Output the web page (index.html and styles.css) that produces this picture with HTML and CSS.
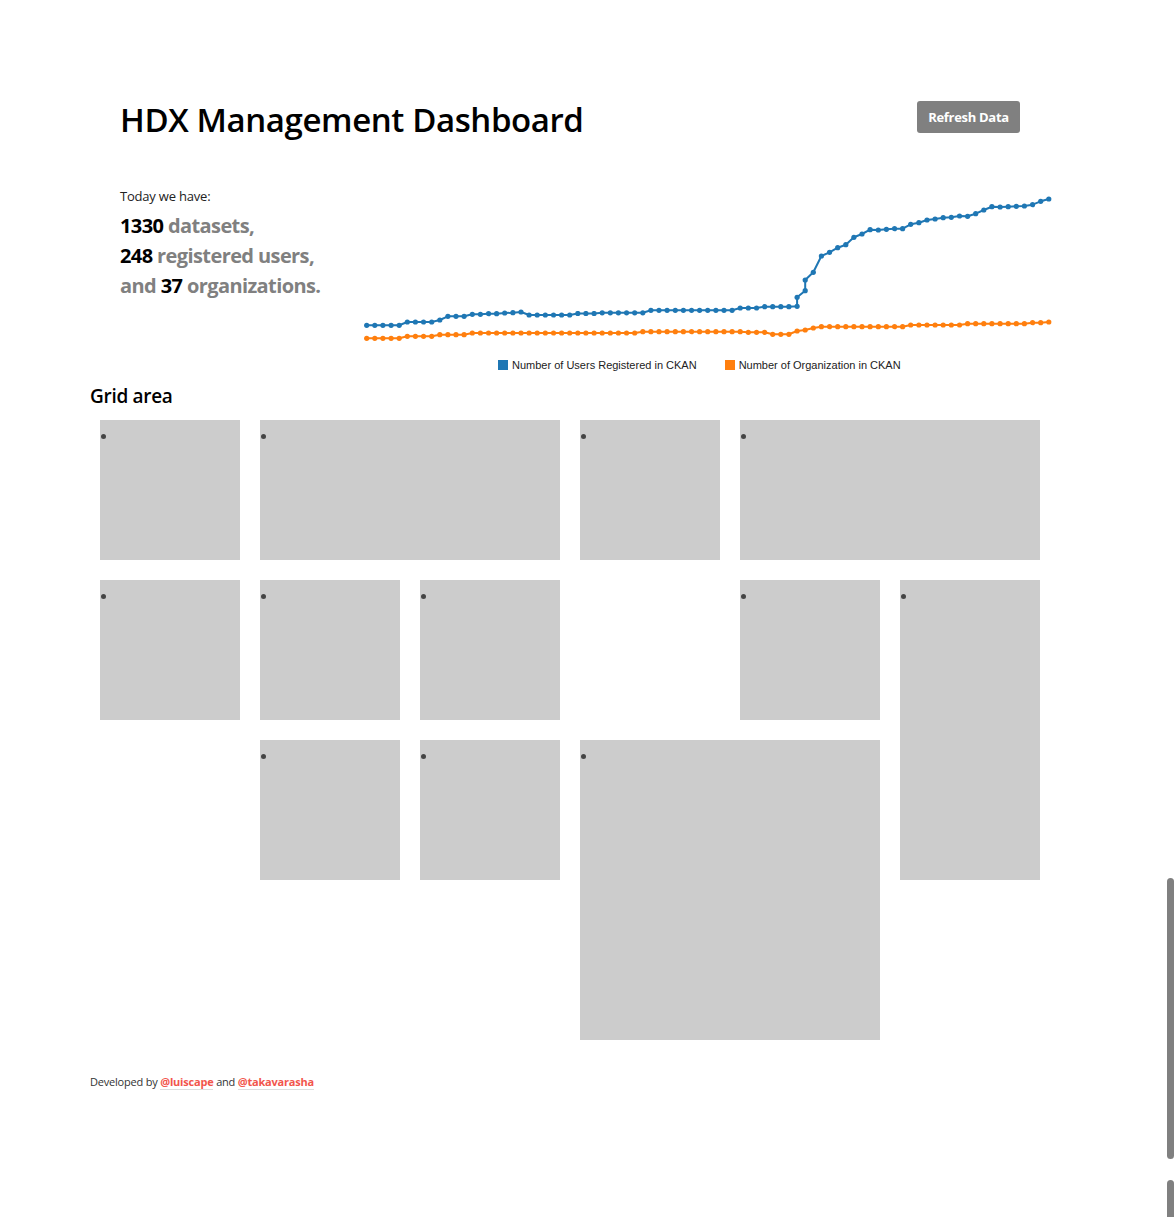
FILE: index.html
```html
<!DOCTYPE html>
<html lang="en">
<head>
<meta charset="utf-8">
<title>HDX Management Dashboard</title>
<link rel="stylesheet" href="styles.css">
</head>
<body>
<div class="page">
  <header class="header">
    <h1 class="title">HDX Management Dashboard</h1>
    <button class="refresh">Refresh Data</button>
  </header>

  <section class="summary">
    <div class="stats">
      <p class="today">Today we have:</p>
      <p class="stat-line first"><b>1330</b> datasets,</p>
      <p class="stat-line"><b>248</b> registered users,</p>
      <p class="stat-line">and <b>37</b> organizations.</p>
    </div>
    <div class="chart">
      <svg class="chart-svg" width="700" height="172" viewBox="0 0 700 172">
        <defs>
          <marker id="dot-blue" markerWidth="6" markerHeight="6" refX="3" refY="3" markerUnits="userSpaceOnUse">
            <circle cx="3" cy="3" r="2.6" fill="#1f77b4"/>
          </marker>
          <marker id="dot-orange" markerWidth="6" markerHeight="6" refX="3" refY="3" markerUnits="userSpaceOnUse">
            <circle cx="3" cy="3" r="2.6" fill="#ff7f0e"/>
          </marker>
        </defs>
        <polyline class="line-blue" points="6.7,145.3 14.8,145.3 22.9,145.3 31.1,145.3 39.2,145.3 47.3,142 55.4,142 63.5,142 71.7,142 79.8,140 87.9,136.3 96,136.3 104.1,136.3 112.3,134.3 120.4,134.3 128.5,133.7 136.6,133.7 144.7,133 152.9,132.7 161,132 169.1,135 177.2,135 185.3,135 193.5,135 201.6,135 209.7,135 217.8,133.5 225.9,133.5 234.1,133.5 242.2,132.8 250.3,132.8 258.4,132.8 266.5,132.8 274.7,132.8 282.8,132.8 290.9,130.3 299,130.3 307.1,130.3 315.3,130.3 323.4,130.3 331.5,130.3 339.6,130.3 347.7,130.3 355.9,130.3 364,130.3 372.1,130.3 380.2,128 388.3,128 396.5,128 404.6,126.7 412.7,126.7 420.8,126.7 428.9,126.7 437.1,126.3 437.1,117.3 445.2,110.7 445.2,100 453.3,92.3 461.4,76 469.5,72.3 477.7,67.7 485.8,64.7 493.9,57.3 502,54 510.1,49.7 518.3,50 526.4,49.3 534.5,48.7 542.6,48.7 550.7,44.3 558.9,42.7 567,40 575.1,39 583.2,37.7 591.3,37.3 599.5,36 607.6,36.3 615.7,33.7 623.8,30 631.9,26.7 640.1,27 648.2,26.7 656.3,26.3 664.4,26 672.5,24.7 680.7,21.3 688.8,19"/>
        <polyline class="line-orange" points="6.7,158.3 14.8,158.3 22.9,158.3 31.1,158.3 39.2,158.3 47.3,156.3 55.4,156.3 63.5,156.3 71.7,156.3 79.8,154.7 87.9,154.7 96,154.7 104.1,154.7 112.3,153 120.4,153 128.5,153 136.6,153 144.7,153 152.9,153 161,153 169.1,153 177.2,153 185.3,153 193.5,153 201.6,153 209.7,153 217.8,153 225.9,153 234.1,153 242.2,153 250.3,153 258.4,153 266.5,153 274.7,153 282.8,151.7 290.9,151.7 299,151.7 307.1,151.7 315.3,151.7 323.4,151.7 331.5,151.7 339.6,151.7 347.7,151.7 355.9,151.7 364,151.7 372.1,151.7 380.2,151.7 388.3,152.3 396.5,152.3 404.6,152.3 412.7,154.3 420.8,154.3 428.9,154.3 437.1,151 445.2,150 453.3,148 461.4,146.7 469.5,146.7 477.7,146.7 485.8,146.7 493.9,146.7 502,146.7 510.1,146.7 518.3,146.7 526.4,146.7 534.5,146.7 542.6,146.7 550.7,145 558.9,145 567,145 575.1,145 583.2,145 591.3,145 599.5,145 607.6,143.7 615.7,143.7 623.8,143.7 631.9,143.7 640.1,143.7 648.2,143.7 656.3,143.7 664.4,143.7 672.5,142.7 680.7,142.7 688.8,142"/>
      </svg>
      <div class="legend">
        <span class="legend-item"><i class="swatch swatch-blue"></i>Number of Users Registered in CKAN</span>
        <span class="legend-item"><i class="swatch swatch-orange"></i>Number of Organization in CKAN</span>
      </div>
    </div>
  </section>

  <h2 class="grid-title">Grid area</h2>

  <div class="grid">
    <div class="tile t1"><span class="dot"></span></div>
    <div class="tile t2"><span class="dot"></span></div>
    <div class="tile t3"><span class="dot"></span></div>
    <div class="tile t4"><span class="dot"></span></div>
    <div class="tile t5"><span class="dot"></span></div>
    <div class="tile t6"><span class="dot"></span></div>
    <div class="tile t7"><span class="dot"></span></div>
    <div class="tile t8"><span class="dot"></span></div>
    <div class="tile t9"><span class="dot"></span></div>
    <div class="tile t10"><span class="dot"></span></div>
    <div class="tile t11"><span class="dot"></span></div>
    <div class="tile t12"><span class="dot"></span></div>
  </div>

  <footer class="footer">
    Developed by <a href="#">@luiscape</a> and <a href="#">@takavarasha</a>
  </footer>
</div>
<div class="scroll-thumb"></div>
<div class="scroll-thumb2"></div>
</body>
</html>
```

FILE: styles.css
```css
html, body {
  margin: 0;
  padding: 0;
  background: #fff;
}

body {
  font-family: "Open Sans", "Noto Sans", sans-serif;
  color: #000;
}

.page {
  padding: 98px 0 120px 0;
}

.header {
  width: 900px;
  margin-left: 120px;
  display: flex;
  justify-content: space-between;
  align-items: flex-start;
}

.title {
  margin: 0;
  font-size: 33px;
  line-height: 44px;
  font-weight: 600;
  letter-spacing: -0.4px;
}

.refresh {
  margin-top: 3px;
  height: 32px;
  width: 103px;
  border: none;
  border-radius: 3px;
  background: #808080;
  color: #fff;
  font-family: "Open Sans", sans-serif;
  font-weight: 700;
  font-size: 13px;
  letter-spacing: -0.3px;
  padding: 0;
}

.summary {
  display: flex;
  margin-top: 38px;
}

.stats {
  width: 240px;
  margin-left: 120px;
}

.stats p {
  margin: 0;
}

.today {
  font-size: 13px;
  line-height: 20px;
  margin-top: 6px !important;
  color: #222;
  letter-spacing: -0.2px;
}

.stat-line {
  font-size: 20px;
  line-height: 30px;
  font-weight: 700;
  color: #808080;
  letter-spacing: -0.6px;
}

.stats .first {
  margin-top: 5px;
}

.stat-line b {
  color: #000;
  font-weight: 700;
}

.chart {
  width: 700px;
  display: flex;
  flex-direction: column;
}

.chart-svg {
  display: block;
}

.line-blue, .line-orange {
  fill: none;
  stroke-width: 2;
  stroke-linejoin: round;
}

.line-blue {
  stroke: #1f77b4;
  marker-start: url(#dot-blue);
  marker-mid: url(#dot-blue);
  marker-end: url(#dot-blue);
}

.line-orange {
  stroke: #ff7f0e;
  marker-start: url(#dot-orange);
  marker-mid: url(#dot-orange);
  marker-end: url(#dot-orange);
}

.legend {
  display: flex;
  gap: 28px;
  padding-left: 138px;
  margin-top: 6px;
  font-family: "Liberation Sans", Arial, sans-serif;
  font-size: 11px;
  line-height: 14px;
  color: #222;
}

.legend-item {
  display: flex;
  align-items: center;
}

.swatch {
  display: inline-block;
  width: 10px;
  height: 10px;
  margin-right: 4px;
}

.swatch-blue { background: #1f77b4; }
.swatch-orange { background: #ff7f0e; }

.grid-title {
  margin: 11px 0 0 90px;
  font-size: 19px;
  line-height: 26px;
  font-weight: 600;
  letter-spacing: -0.3px;
}

.grid {
  margin: 11px 0 0 100px;
  display: grid;
  grid-template-columns: repeat(6, 140px);
  grid-auto-rows: 140px;
  gap: 20px;
}

.tile {
  background: #cccccc;
  padding: 14px 0 0 1px;
}

.dot {
  display: block;
  width: 5px;
  height: 5px;
  border-radius: 50%;
  background: #444;
}

.t1 { grid-column: 1; grid-row: 1; }
.t2 { grid-column: 2 / span 2; grid-row: 1; }
.t3 { grid-column: 4; grid-row: 1; }
.t4 { grid-column: 5 / span 2; grid-row: 1; }
.t5 { grid-column: 1; grid-row: 2; }
.t6 { grid-column: 2; grid-row: 2; }
.t7 { grid-column: 3; grid-row: 2; }
.t8 { grid-column: 5; grid-row: 2; }
.t9 { grid-column: 6; grid-row: 2 / span 2; }
.t10 { grid-column: 2; grid-row: 3; }
.t11 { grid-column: 3; grid-row: 3; }
.t12 { grid-column: 4 / span 2; grid-row: 3 / span 2; }

.footer {
  margin: 34px 0 0 90px;
  font-size: 11px;
  line-height: 16px;
  color: #333;
  letter-spacing: -0.2px;
}

.footer a {
  color: #f2554c;
  font-weight: 700;
  text-decoration: none;
  border-bottom: 1px solid #ddd;
}

.scroll-thumb {
  position: fixed;
  left: 1167px;
  top: 878px;
  width: 7px;
  height: 281px;
  border-radius: 4px;
  background: #808080;
}

.scroll-thumb2 {
  position: fixed;
  left: 1167px;
  top: 1180px;
  width: 7px;
  height: 50px;
  border-radius: 4px;
  background: #808080;
}
```
